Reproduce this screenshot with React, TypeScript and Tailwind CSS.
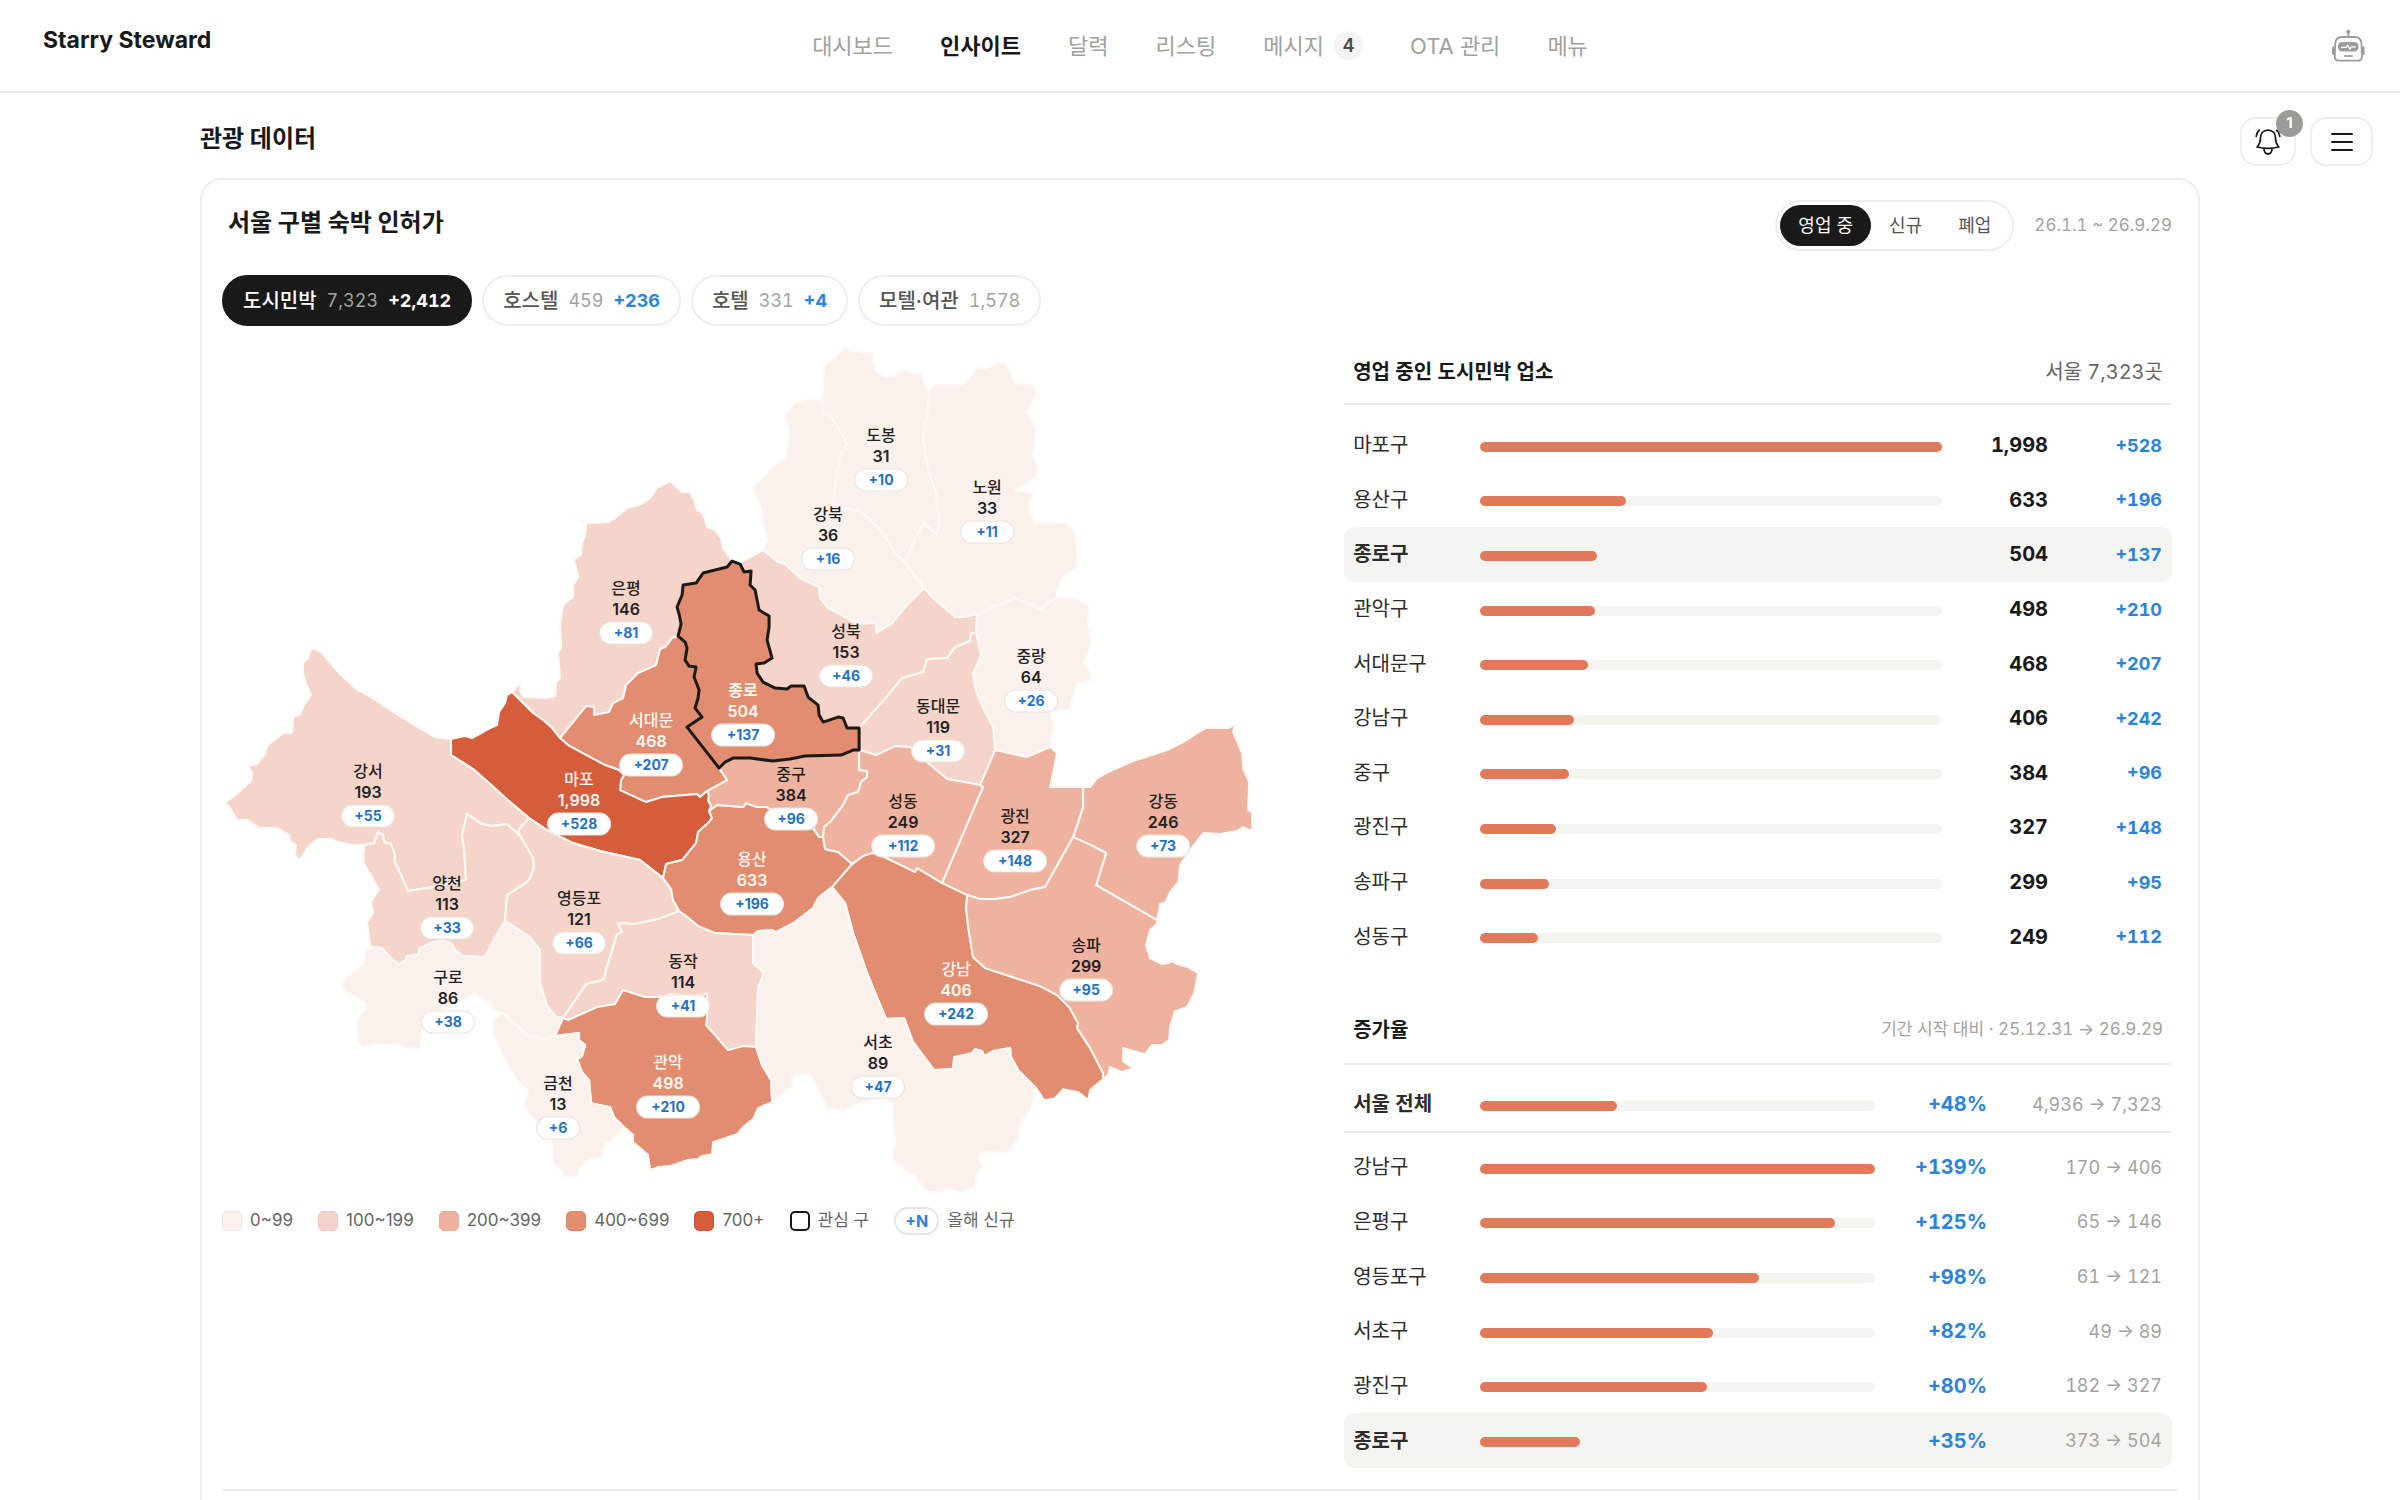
import React from 'react';

/* ---------- Seoul district map data ---------- */

// Every border is stored once and shared by the districts on both sides of it.
const BORDERS: Record<string, string> = {
  gsOut:
    '451,739 435,737 403,718 368,695 357,690 337,671 322,653 313,648 310,651 308,658 303,663 303,673 306,683 311,695 305,703 300,714 293,717 292,733 283,733 267,746 265,754 257,764 248,766 252,772 252,780 243,788 233,797 225,802 230,808 237,820 248,820 259,828 277,828 289,835 290,841 296,845 295,853 297,859 302,857 308,847 318,839 332,839 337,842 352,845 364,845',
  gsYc: '364,845 374,843 378,832 383,835 384,842 391,844 395,855 394,860 400,873 408,891 433,887 466,880 465,865 464,849 462,835 467,814 482,824 492,826 507,824 521,837',
  gsYd: '521,837 518,832 520,828 529,818',
  gsMp: '451,739 451,755 473,769 490,784 510,802 529,818',
  mpYd: '529,818 547,830 557,835 573,843 600,851 640,860 663,878',
  mpYs: '663,878 666,864 682,860 696,843 698,832 708,823 712,818 709,811',
  mpJg: '709,811 711,806 708,800 709,795 707,791',
  mpSd: '707,791 700,797 697,794 662,797 646,802 620,790 621,780 624,775 619,770 605,765 590,757 568,745 560,738',
  mpEp: '560,738 552,728 543,720 533,713 512,692',
  mpOut: '512,692 507,695 505,703 499,712 497,725 490,728 472,738 465,736 460,737 451,739',
  epOut:
    '512,692 517,686 521,682 520,690 523,697 548,698 555,696 556,682 560,678 558,653 561,648 560,623 563,605 573,597 573,585 578,577 575,563 573,560 581,555 582,543 585,535 586,524 575,516 588,523 608,522 615,518 627,508 642,504 650,498 657,488 670,481 682,492 690,492 694,500 697,510 703,513 707,527 715,530 721,538 723,548 732,561',
  epJn: '732,561 727,567 703,573 696,583 683,585 682,595 677,607 679,614 681,624 678,636',
  jnSd: '678,636 685,642 687,648 685,660 689,666 696,667 694,677 699,690 698,698 695,708 702,717 687,727 719,768',
  sdJg: '719,768 727,780 707,791',
  epSd: '560,738 586,706 594,707 594,715 609,712 613,703 623,698 626,685 638,673 656,665 660,649 665,647 672,638 678,636',
  jnJg: '719,768 725,762 733,758 750,758 773,761 790,759 805,756 841,755 853,750 859,750',
  jnDd: '859,750 859,728',
  jnSb: '859,728 847,728 843,718 838,717 823,722 819,715 818,705 808,697 804,686 791,686 787,689 775,688 763,682 757,673 756,664 764,663 772,658 767,640 769,627 769,616 759,610 755,590 750,585 751,571 744,572 740,564',
  jnOut: '740,564 732,561',
  sbOut: '740,564 743,561 763,550',
  sbGb: '763,550 778,562 785,564 800,578 819,587 820,598 827,607 838,613 857,624 876,623 876,633 892,623 907,605 917,595 924,588',
  sbNw: '924,588 933,598 955,617 965,617 977,614',
  sbJr: '977,614 976,633',
  sbDd: '976,633 971,633 970,641 955,647 947,658 927,659 923,672 902,678 888,695 859,728',
  ddJr: '976,633 981,655 973,673 975,688 983,708 993,727 995,750',
  ddGj: '995,750 980,785',
  ddSg: '980,785 947,779 928,763 910,747 895,746 876,755 859,750',
  sgJg: '859,750 859,770 867,771 867,777 861,782 858,792 848,795 843,805 830,822 824,827 823,837',
  jgYs: '709,811 717,805 743,807 746,803 757,807 767,807 775,812 800,825 813,828 819,837 823,837',
  sgYs: '823,837 825,849 838,852 852,864',
  ysGn: '852,864 832,887',
  ysSc: '832,887 818,898 813,908 795,922 776,932 772,930 758,931 753,935',
  ysDj: '753,935 715,933 698,926 687,917 679,911',
  ysYd: '679,911 673,900 671,889 663,878',
  ydDj: '679,911 658,919 635,924 618,923 622,932 617,934 603,980 586,984 563,1018',
  ydGr: '563,1018 556,1017 547,1006 540,983 540,950 530,937 505,921',
  ycYd: '505,921 507,895 527,882 530,878 534,867 533,858 521,837',
  ycGr: '505,921 495,938 485,957 463,956 455,950 452,944 445,941 433,942 420,948 418,955 407,956 406,960 399,964 392,959 382,948 370,947',
  ycOut: '370,947 369,936 367,922 373,913 371,901 379,890 373,879 363,862 364,845',
  grOut:
    '370,947 365,950 363,964 347,976 341,984 345,992 357,998 367,1004 366,1009 357,1019 358,1043 363,1047 377,1044 387,1045 397,1043 403,1047 420,1050 422,1031 440,1010 460,1002 475,993 488,1002 493,1009 502,1013',
  grGc: '502,1013 505,1015 528,1036 543,1039 555,1036',
  grGa: '555,1036 563,1018',
  gcGa: '555,1036 579,1033 579,1040 585,1045 582,1056 577,1059 582,1072 589,1080 591,1103 610,1107 614,1117 624,1127',
  gcOut:
    '502,1013 493,1020 493,1032 503,1057 518,1082 528,1090 523,1105 530,1115 545,1130 552,1143 553,1163 563,1172 564,1177 577,1177 580,1168 588,1160 602,1157 605,1145 620,1133 624,1127',
  gaOut:
    '624,1127 633,1135 633,1142 648,1155 650,1170 658,1167 670,1166 687,1160 698,1159 701,1156 712,1154 713,1142 737,1134 743,1127 753,1119 758,1108 772,1102',
  gaSc: '772,1102 771,1080 762,1065 756,1047',
  gaDj: '756,1047 743,1046 728,1050 706,1025 707,1017 707,994 693,997 672,994 660,997 645,997 623,990 615,1004 597,1007 568,1020 563,1018',
  djSc: '756,1047 758,987 764,973 753,963 753,935',
  scOut:
    '772,1102 782,1093 793,1087 792,1077 797,1074 810,1074 815,1083 820,1093 827,1108 843,1111 860,1103 883,1098 892,1103 893,1127 895,1143 891,1160 915,1177 928,1192 940,1192 947,1189 963,1192 975,1187 977,1173 984,1167 977,1157 982,1152 1007,1153 1018,1140 1020,1123 1030,1112 1033,1100 1036,1088',
  scGn: '832,887 845,903 853,933 867,973 886,1019 904,1018 913,1042 934,1070 953,1069 954,1057 972,1053 975,1049 982,1051 984,1056 993,1051 1010,1048 1011,1057 1018,1070 1036,1088',
  gnOut: '1036,1088 1044,1100 1055,1098 1063,1089 1078,1092 1088,1100 1090,1090 1103,1079',
  gnSp: '1103,1079 1103,1073 1090,1048 1077,1028 1078,1023 1069,1007 1057,995 1040,986 985,968 973,957 968,927 966,908 967,895',
  gnGj: '967,895 942,883',
  gnSg: '942,883 917,868 915,872 882,856 872,853 863,856 852,864',
  sgGj: '942,883 983,787 980,785',
  gjSp: '967,895 980,899 995,899 1010,897 1030,890 1045,887 1073,837',
  gjGd: '1073,837 1078,823 1083,807 1083,787',
  gjOut: '1083,787 1050,787 1057,753 1050,747',
  gjJr: '1050,747 1027,757 995,750',
  gdOut:
    '1083,787 1090,787 1097,778 1110,771 1133,761 1167,750 1183,742 1205,728 1228,728 1235,724 1233,732 1242,753 1243,768 1249,782 1248,810 1252,812 1252,831 1243,827 1237,831 1220,834 1203,833 1190,850 1180,865 1178,882 1170,892 1165,903 1160,904 1157,920',
  gdSp: '1073,837 1093,846 1106,853 1096,885 1157,920',
  spOut:
    '1157,920 1157,924 1150,930 1146,945 1150,958 1162,964 1168,963 1172,961 1177,964 1188,967 1198,973 1196,983 1194,993 1187,1007 1175,1011 1170,1027 1169,1040 1162,1045 1152,1045 1145,1054 1123,1048 1123,1061 1133,1068 1122,1072 1110,1067 1108,1075 1103,1079',
  nwJr: '977,614 1015,598 1040,609 1057,597',
  jrOut:
    '1057,597 1077,598 1083,603 1089,606 1088,623 1092,640 1088,653 1083,663 1088,668 1092,680 1077,683 1072,700 1070,709 1050,712 1054,723 1050,747',
  nwOut:
    '1057,597 1056,592 1063,577 1077,567 1076,533 1066,523 1034,522 1028,507 1033,493 1015,490 1036,477 1038,468 1033,455 1037,430 1027,413 1037,393 1034,385 1015,383 1006,363 997,363 986,368 977,368 963,385 934,385 929,392',
  dbNw: '929,392 928,407 923,440 929,473 936,493 939,522 937,535 924,523 915,537 905,563',
  gbNw: '905,563 924,588',
  dbGb: '905,563 895,553 883,533 863,513 852,509 834,510 833,503 836,480 840,455 847,444 831,416 823,414 822,400',
  dbOut:
    '822,400 823,380 824,365 836,357 843,348 863,353 872,353 875,370 884,377 895,375 904,369 915,374 922,372 923,380 929,392',
  gbOut: '822,400 811,399 795,403 785,415 789,433 786,458 774,465 766,475 753,487 756,498 761,507 762,520 767,540 763,550',
};

// A leading "-" walks the border backwards.
function outline(refs: string): string {
  const points = refs.split(' ').flatMap((ref) => {
    const reversed = ref.startsWith('-');
    const list = BORDERS[reversed ? ref.slice(1) : ref].split(' ');
    return reversed ? [...list].reverse() : list;
  });
  return `M${points.join('L')}Z`;
}

interface District {
  name: string;
  count: number;
  added: number;
  x: number;
  y: number;
  edge: string;
}

const DISTRICTS: District[] = [
  { name: '도봉', count: 31, added: 10, x: 881, y: 435, edge: '-dbNw -dbOut -dbGb' },
  { name: '노원', count: 33, added: 11, x: 987, y: 487, edge: 'nwOut dbNw gbNw sbNw nwJr' },
  { name: '강북', count: 36, added: 16, x: 828, y: 514, edge: 'gbNw -sbGb -gbOut -dbGb' },
  { name: '은평', count: 146, added: 81, x: 626, y: 588, edge: 'epOut epJn -epSd mpEp' },
  { name: '성북', count: 153, added: 46, x: 846, y: 631, edge: 'sbOut sbGb sbNw sbJr sbDd jnSb' },
  { name: '중랑', count: 64, added: 26, x: 1031, y: 656, edge: 'nwJr jrOut gjJr -ddJr -sbJr' },
  { name: '서대문', count: 468, added: 207, x: 651, y: 720, edge: 'epSd jnSd sdJg mpSd' },
  { name: '동대문', count: 119, added: 31, x: 938, y: 706, edge: 'ddJr ddGj ddSg jnDd -sbDd' },
  { name: '마포', count: 1998, added: 528, x: 579, y: 779, edge: 'gsMp mpYd mpYs mpJg mpSd mpEp mpOut' },
  { name: '강서', count: 193, added: 55, x: 368, y: 771, edge: 'gsOut gsYc gsYd -gsMp' },
  { name: '양천', count: 113, added: 33, x: 447, y: 883, edge: 'gsYc -ycYd ycGr ycOut' },
  { name: '영등포', count: 121, added: 66, x: 579, y: 898, edge: '-gsYd -ycYd -ydGr -ydDj ysYd -mpYd' },
  { name: '용산', count: 633, added: 196, x: 752, y: 859, edge: 'mpYs jgYs sgYs ysGn ysSc ysDj ysYd' },
  { name: '중구', count: 384, added: 96, x: 791, y: 774, edge: 'jnJg sgJg -jgYs mpJg -sdJg' },
  { name: '성동', count: 249, added: 112, x: 903, y: 801, edge: 'sgJg sgYs -gnSg sgGj ddSg' },
  { name: '광진', count: 327, added: 148, x: 1015, y: 816, edge: 'gjJr ddGj -sgGj -gnGj gjSp gjGd gjOut' },
  { name: '강동', count: 246, added: 73, x: 1163, y: 801, edge: 'gdOut -gdSp gjGd' },
  { name: '강남', count: 406, added: 242, x: 956, y: 969, edge: 'scGn gnOut gnSp gnGj gnSg ysGn' },
  { name: '송파', count: 299, added: 95, x: 1086, y: 945, edge: 'gdSp spOut gnSp gjSp' },
  { name: '동작', count: 114, added: 41, x: 683, y: 961, edge: 'ydDj -gaDj djSc ysDj' },
  { name: '구로', count: 86, added: 38, x: 448, y: 977, edge: 'grOut grGc grGa ydGr ycGr' },
  { name: '관악', count: 498, added: 210, x: 668, y: 1062, edge: 'gaOut gaSc gaDj -grGa gcGa' },
  { name: '서초', count: 89, added: 47, x: 878, y: 1042, edge: 'scOut -scGn ysSc -djSc -gaSc' },
  { name: '금천', count: 13, added: 6, x: 558, y: 1083, edge: 'gcOut -gcGa -grGc' },
  { name: '종로', count: 504, added: 137, x: 743, y: 690, edge: 'epJn jnSd jnJg jnDd jnSb jnOut' },
];

function fillClass(count: number): string {
  if (count >= 700) return 'fill-[#d65d3c]';
  if (count >= 400) return 'fill-[#e28d6f]';
  if (count >= 200) return 'fill-[#eeb29e]';
  if (count >= 100) return 'fill-[#f5d5ca]';
  return 'fill-[#fbf1ec]';
}

function SeoulMap() {
  return (
    <svg viewBox="222 340 1076 862" className="block w-full" role="img" aria-label="서울 구별 숙박 인허가 지도">
      {DISTRICTS.map((d) => (
        <path
          key={d.name}
          d={outline(d.edge)}
          strokeLinejoin="round"
          className={`${fillClass(d.count)} ${d.name === '종로' ? 'stroke-[#1b1a18] stroke-3' : 'stroke-[#fffaf7] stroke-2'}`}
        />
      ))}
      {DISTRICTS.map((d) => {
        const chars = String(d.added).length;
        const pill = 33 + chars * 10;
        const ink = d.count >= 400 ? 'fill-[#fff8f4]' : 'fill-[#23211f]';
        return (
          <g key={d.name} textAnchor="middle">
            <text x={d.x} y={d.y + 6} className={`${ink} text-[16px] ${d.name === '종로' ? 'font-bold' : 'font-medium'}`}>
              {d.name}
            </text>
            <text x={d.x} y={d.y + 27} className={`${ink} text-[16px] font-semibold`}>
              {d.count.toLocaleString('en-US')}
            </text>
            <rect
              x={d.x - pill / 2}
              y={d.y + 34}
              width={pill}
              height={22}
              rx={11}
              className="fill-white stroke-[#e9e4e0] stroke-1"
            />
            <text x={d.x} y={d.y + 50} className="fill-[#2572c4] text-[14px] font-bold">
              +{d.added}
            </text>
          </g>
        );
      })}
    </svg>
  );
}

/* ---------- Icons ---------- */

function RobotIcon() {
  return (
    <svg viewBox="0 0 34 34" className="size-[34px]" fill="none" aria-hidden="true">
      <g stroke="#9c9c98" strokeWidth="1.8">
        <path d="M17.3 3v5" />
        <path d="M11 8h12.600q6.400 0 6.900 6.400l.4 13q0 4.200-4.200 4.200H8q-4.200 0-4.200-4.200l.4-13Q4.700 8 11 8Z" />
      </g>
      <circle cx="17.300" cy="2.800" r="2" fill="#9c9c98" />
      <rect x="1" y="17.500" width="2.600" height="8.500" rx="1.200" fill="#9c9c98" />
      <rect x="31" y="17.500" width="2.600" height="8.500" rx="1.200" fill="#9c9c98" />
      <rect x="7" y="13" width="20.500" height="9.600" rx="4.200" fill="#9c9c98" />
      <path d="M10 18.300h5.300l1.500-2.200 2 4.200 1.600-2.400H25" stroke="#fff" strokeWidth="1.200" strokeLinejoin="round" />
      <path d="M13.300 27h8.400" stroke="#9c9c98" strokeWidth="1.800" />
    </svg>
  );
}

function BellIcon() {
  return (
    <svg
      viewBox="0 0 28 28"
      className="size-7"
      fill="none"
      stroke="#191919"
      strokeWidth="1.8"
      strokeLinecap="round"
      strokeLinejoin="round"
      aria-hidden="true"
    >
      <path d="M14 2.200c-4.800 0-7.400 3.400-7.500 7.600-.1 4.200-.8 6.300-3.400 9.200 3.300 1 7 1.400 10.900 1.400s7.600-.4 10.900-1.400c-2.600-2.900-3.300-5-3.400-9.200-.1-4.200-2.700-7.600-7.500-7.600Z" />
      <path d="M10 20.800c.2 3.400 1.700 5.200 4 5.200s3.800-1.800 4-5.200" />
      <path d="M5.200 2.300C3.400 3.800 2.300 5.900 2.200 8.300M22.800 2.300c1.800 1.500 2.900 3.600 3 6" />
    </svg>
  );
}

function MenuIcon() {
  return (
    <svg viewBox="0 0 24 24" className="size-6" stroke="#191919" strokeWidth="2" strokeLinecap="round" aria-hidden="true">
      <path d="M2 4h20M2 12h20M2 20h20" />
    </svg>
  );
}

/* ---------- Page parts ---------- */

const NAV = [
  { label: '대시보드' },
  { label: '인사이트', current: true },
  { label: '달력' },
  { label: '리스팅' },
  { label: '메시지', badge: 4 },
  { label: 'OTA 관리' },
  { label: '메뉴' },
];

function Header() {
  return (
    <header className="grid h-[93px] shrink-0 grid-cols-[1fr_auto_1fr] items-center border-b-2 border-[#ececeb] px-[35px]">
      <a href="#" className="pb-3 pl-2 text-[23px] leading-8 font-bold text-[#191919]">
        Starry Steward
      </a>
      <nav className="flex items-center gap-[47px] text-[22px] leading-8 text-[#a1a19e]">
        {NAV.map((item) => (
          <a
            key={item.label}
            href="#"
            aria-current={item.current ? 'page' : undefined}
            className={item.current ? 'font-bold text-[#191919]' : 'flex items-center gap-[10px]'}
          >
            {item.label}
            {item.badge && (
              <span className="flex size-[29px] items-center justify-center rounded-full bg-[#f4f4f2] text-[18px] font-semibold text-[#4a4a48]">
                {item.badge}
              </span>
            )}
          </a>
        ))}
      </nav>
      <button type="button" aria-label="AI 도우미" className="justify-self-end">
        <RobotIcon />
      </button>
    </header>
  );
}

const KINDS = [
  { label: '도시민박', total: '7,323', added: '+2,412', active: true },
  { label: '호스텔', total: '459', added: '+236' },
  { label: '호텔', total: '331', added: '+4' },
  { label: '모텔·여관', total: '1,578' },
];

function KindTabs() {
  return (
    <div className="mt-6 flex gap-[10px]">
      {KINDS.map((k) => (
        <button
          key={k.label}
          type="button"
          aria-pressed={!!k.active}
          className={`flex h-[51px] items-center gap-[10px] rounded-full border-2 px-[19px] text-[18px] tabular-nums ${
            k.active ? 'border-[#191919] bg-[#191919]' : 'border-[#eeeeed] bg-white'
          }`}
        >
          <span className={`text-[20px] font-medium ${k.active ? 'text-white' : 'text-[#555553]'}`}>{k.label}</span>
          <span className="text-[#a3a3a0]">{k.total}</span>
          {k.added && <span className={`font-bold ${k.active ? 'text-white' : 'text-[#2b83db]'}`}>{k.added}</span>}
        </button>
      ))}
    </div>
  );
}

function StatusSwitch() {
  return (
    <div className="flex h-[51px] rounded-full border-2 border-[#eeeeed] p-[3px] text-[18px] text-[#555553]">
      <button type="button" aria-pressed="true" className="rounded-full bg-[#191919] px-[18px] text-white">
        영업 중
      </button>
      <button type="button" aria-pressed="false" className="rounded-full px-[18px]">
        신규
      </button>
      <button type="button" aria-pressed="false" className="rounded-full px-[18px]">
        폐업
      </button>
    </div>
  );
}

const LEGEND = [
  { label: '0~99', tone: 'border-[#f0e4de] bg-[#fbf1ec]' },
  { label: '100~199', tone: 'border-[#eccbc0] bg-[#f5d5ca]' },
  { label: '200~399', tone: 'border-[#e5a994] bg-[#eeb29e]' },
  { label: '400~699', tone: 'border-[#d98466] bg-[#e28d6f]' },
  { label: '700+', tone: 'border-[#cc5535] bg-[#d65d3c]' },
];

function Legend() {
  return (
    <ul className="mt-[5px] flex h-7 items-center gap-[25px] text-[17px] text-[#666664]">
      {LEGEND.map((l) => (
        <li key={l.label} className="flex items-center gap-2">
          <span className={`size-5 rounded-[5px] border ${l.tone}`} />
          {l.label}
        </li>
      ))}
      <li className="flex items-center gap-2">
        <span className="size-5 rounded-[5px] border-2 border-[#191919]" />
        관심 구
      </li>
      <li className="flex items-center gap-2">
        <span className="flex h-7 items-center rounded-full border-2 border-[#e6e6e4] px-[9px] text-[16px] font-bold text-[#2b83db]">
          +N
        </span>
        올해 신규
      </li>
    </ul>
  );
}

interface BarRow {
  name: string;
  share: number;
  value: string;
  note: string;
  bold?: boolean;
  highlight?: boolean;
}

function BarTable({ rows, growth, size, label }: { rows: BarRow[]; growth?: boolean; size: string; label: string }) {
  return (
    <table aria-label={label} className={`w-full table-fixed border-separate border-spacing-0 text-[20px] tabular-nums ${size}`}>
      <colgroup>
        <col className="w-[136px]" />
        <col />
        <col className={growth ? 'w-[112px]' : 'w-[106px]'} />
        <col className={growth ? 'w-[185px]' : 'w-[124px]'} />
      </colgroup>
      <tbody>
        {rows.map((r) => (
          <tr key={r.name} className={r.highlight ? 'bg-[#f4f5f1]' : ''}>
            <th
              scope="row"
              className={`rounded-l-[10px] p-0 pl-[9px] text-left text-[#2c2c2b] ${r.bold ? 'font-bold' : 'font-normal'}`}
            >
              {r.name}
            </th>
            <td className="p-0">
              <div className="mt-[3px] h-[10px] rounded-full bg-[#f4f4f1]">
                <div className="h-full rounded-full bg-[#e07a5b]" style={{ width: `${r.share}%` }} />
              </div>
            </td>
            <td className={`p-0 text-right font-bold ${growth ? 'text-[#2b83db]' : 'text-[#191919]'}`}>{r.value}</td>
            <td
              className={`rounded-r-[10px] p-0 pr-[10px] text-right text-[18px] ${
                growth ? 'text-[#a3a3a0]' : 'font-bold text-[#2b83db]'
              }`}
            >
              {r.note}
            </td>
          </tr>
        ))}
      </tbody>
    </table>
  );
}

const OPEN: [string, number, number][] = [
  ['마포구', 1998, 528],
  ['용산구', 633, 196],
  ['종로구', 504, 137],
  ['관악구', 498, 210],
  ['서대문구', 468, 207],
  ['강남구', 406, 242],
  ['중구', 384, 96],
  ['광진구', 327, 148],
  ['송파구', 299, 95],
  ['성동구', 249, 112],
];

const OPEN_ROWS: BarRow[] = OPEN.map(([name, count, added]) => ({
  name,
  share: (count / 1998) * 100,
  value: count.toLocaleString('en-US'),
  note: `+${added}`,
  bold: name === '종로구',
  highlight: name === '종로구',
}));

const GROWTH: [string, number, string, string][] = [
  ['서울 전체', 48, '4,936', '7,323'],
  ['강남구', 139, '170', '406'],
  ['은평구', 125, '65', '146'],
  ['영등포구', 98, '61', '121'],
  ['서초구', 82, '49', '89'],
  ['광진구', 80, '182', '327'],
  ['종로구', 35, '373', '504'],
];

const GROWTH_ROWS: BarRow[] = GROWTH.map(([name, pct, from, to]) => ({
  name,
  share: (pct / 139) * 100,
  value: `+${pct}%`,
  note: `${from} → ${to}`,
  bold: name === '종로구' || name === '서울 전체',
  highlight: name === '종로구',
}));

function Rankings() {
  return (
    <div className="flex flex-col tabular-nums">
      <div className="flex h-[65px] items-center justify-between border-b-2 border-[#ececeb] px-[9px] text-[20px]">
        <h3 className="font-bold text-[#191919]">영업 중인 도시민박 업소</h3>
        <span className="text-[#666664]">서울 7,323곳</span>
      </div>
      <div className="pt-[13px]">
        <BarTable rows={OPEN_ROWS} size="h-[546px]" label="영업 중인 도시민박 업소" />
      </div>
      <div className="mt-8 flex h-[69px] items-center justify-between border-b-2 border-[#ececeb] px-[9px]">
        <h3 className="text-[20px] font-bold text-[#191919]">증가율</h3>
        <span className="text-[17px] text-[#a3a3a0]">기간 시작 대비 · 25.12.31 → 26.9.29</span>
      </div>
      <div className="border-b-2 border-[#ececeb] pt-3">
        <BarTable rows={GROWTH_ROWS.slice(0, 1)} growth size="h-[54px]" label="서울 전체 증가율" />
      </div>
      <div className="pt-[7px]">
        <BarTable rows={GROWTH_ROWS.slice(1)} growth size="h-[328px]" label="구별 증가율" />
      </div>
    </div>
  );
}

export default function App() {
  return (
    <div className="flex h-screen flex-col overflow-hidden bg-white font-['Inter','Noto_Sans_CJK_KR',sans-serif] text-[#191919]">
      <Header />
      <div className="grid shrink-0 grid-cols-[1fr_minmax(0,2000px)_1fr] items-start pt-6 pb-3">
        <h1 className="col-start-2 text-[24px] leading-[43px] font-bold">관광 데이터</h1>
        <div className="flex justify-end gap-[14px] pr-[27px]">
          <button
            type="button"
            aria-label="알림"
            className="relative flex h-[49px] w-14 items-center justify-center rounded-2xl border-2 border-[#eeeeed]"
          >
            <BellIcon />
            <span className="absolute -top-[9px] -right-[9px] flex size-[27px] items-center justify-center rounded-full bg-[#9b9b98] text-[15px] font-bold text-white">
              1
            </span>
          </button>
          <button
            type="button"
            aria-label="메뉴 열기"
            className="flex h-[49px] w-[63px] items-center justify-center rounded-2xl border-2 border-[#eeeeed]"
          >
            <MenuIcon />
          </button>
        </div>
      </div>
      <main className="mx-auto w-full max-w-[2000px] grow rounded-t-[22px] border-2 border-b-0 border-[#eeeeed] px-5 pt-5">
        <div className="flex items-start justify-between px-[6px]">
          <h2 className="text-[24px] leading-[45px] font-bold">서울 구별 숙박 인허가</h2>
          <div className="flex items-center gap-5">
            <StatusSwitch />
            <span className="text-[17px] text-[#a3a3a0] tabular-nums">26.1.1 ~ 26.9.29</span>
          </div>
        </div>
        <KindTabs />
        <div className="mt-[14px] grid grid-cols-[1.3fr_1fr] gap-[46px] pr-[6px]">
          <div>
            <SeoulMap />
            <Legend />
          </div>
          <Rankings />
        </div>
        <hr className="mt-[21px] border-t-2 border-[#ececeb]" />
      </main>
    </div>
  );
}
